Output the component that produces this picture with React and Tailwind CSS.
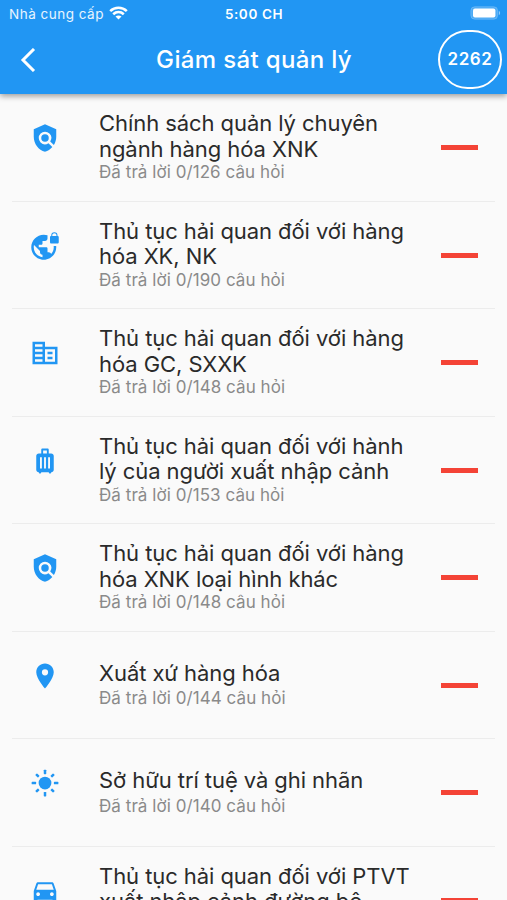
import {
  MdPolicy,
  MdVpnLock,
  MdCorporateFare,
  MdLuggage,
  MdPlace,
  MdDirectionsCar
} from 'react-icons/md';

const rayAngles = [0, 45, 90, 135, 180, 225, 270, 315];

function SunIcon({ size, className }) {
  return (
    <svg width={size} height={size} viewBox="0 0 24 24" className={className} fill="currentColor">
      <circle cx="12" cy="12" r="5.1" />
      {rayAngles.map((angle) => (
        <rect
          key={angle}
          x="11"
          y={angle % 90 === 0 ? 1.3 : 1.9}
          width="2"
          height={angle % 90 === 0 ? 3.6 : 3.1}
          rx=".5"
          transform={`rotate(${angle} 12 12)`}
        />
      ))}
    </svg>
  );
}

const topics = [
  { icon: MdPolicy, lines: ['Chính sách quản lý chuyên', 'ngành hàng hóa XNK'], total: 126 },
  { icon: MdVpnLock, lines: ['Thủ tục hải quan đối với hàng', 'hóa XK, NK'], total: 190 },
  { icon: MdCorporateFare, lines: ['Thủ tục hải quan đối với hàng', 'hóa GC, SXXK'], total: 148 },
  { icon: MdLuggage, lines: ['Thủ tục hải quan đối với hành', 'lý của người xuất nhập cảnh'], total: 153 },
  { icon: MdPolicy, lines: ['Thủ tục hải quan đối với hàng', 'hóa XNK loại hình khác'], total: 148 },
  { icon: MdPlace, lines: ['Xuất xứ hàng hóa'], total: 144 },
  { icon: SunIcon, lines: ['Sở hữu trí tuệ và ghi nhãn'], total: 140 },
  { icon: MdDirectionsCar, lines: ['Thủ tục hải quan đối với PTVT', 'xuất nhập cảnh đường bộ'], total: 120 }
];

function StatusBar() {
  return (
    <div className="grid h-7 grid-cols-3 items-center pl-[9px] pr-[6px] text-[13.5px] leading-7">
      <div className="flex items-center gap-[5px] whitespace-nowrap text-white/90">
        <span className="tracking-[0.5px]">Nhà cung cấp</span>
        <svg width="19" height="14" viewBox="0 0 19 14" className="mb-[3px]" fill="none" stroke="white" strokeWidth="2.6">
          <path d="M1.2 5.1C5.9 .6 13.1 .6 17.8 5.1" />
          <path d="M4.2 8.2C7.3 5.4 11.7 5.4 14.8 8.2" />
          <path d="M6.5 10.6C8.2 9 10.8 9 12.5 10.6L9.5 13.6Z" fill="white" stroke="none" />
        </svg>
      </div>
      <span className="-ml-[2px] text-center text-[13.5px] font-semibold tracking-[0.6px]">5:00 CH</span>
      <svg width="31" height="14" viewBox="0 0 31 14" className="mb-[2px] justify-self-end">
        <rect x=".8" y=".7" width="26.8" height="12.6" rx="4" fill="white" fillOpacity=".2" stroke="white" strokeOpacity=".2" />
        <rect x="3" y="2.6" width="22.4" height="8.8" rx="2" fill="white" />
        <path d="M28.8 4.8C30.6 5.6 30.6 8.4 28.8 9.2Z" fill="white" fillOpacity=".5" />
      </svg>
    </div>
  );
}

function Header() {
  return (
    <header className="relative h-[94px] shrink-0 bg-[#2196f3] text-white shadow-[0_2px_6px_rgba(0,0,0,0.4)]">
      <StatusBar />
      <div className="grid h-[63px] grid-cols-[80px_1fr_80px] items-center">
        <button className="pl-[20px]">
          <svg width="16" height="24" viewBox="0 0 16 24" fill="none" stroke="white" strokeWidth="3">
            <path d="M14 1L3 12l11 11" />
          </svg>
        </button>
        <h1 className="pl-px pt-px text-center text-[24px] font-[450] tracking-[0.35px]">Giám sát quản lý</h1>
        <div className="mr-[5px] flex h-[59px] w-[64px] items-center justify-center justify-self-end rounded-full border-[2.5px] border-white text-[17px] font-semibold tracking-[0.6px]">
          2262
        </div>
      </div>
    </header>
  );
}

function TopicRow({ topic }) {
  const Icon = topic.icon;
  const single = topic.lines.length === 1;
  return (
    <li className="mx-3 flex h-[107.5px] shrink-0 border-b border-[#ececec]">
      <div className="w-[87px] shrink-0 pl-[18px] pt-[29px]">
        <Icon size={30} className="text-[#2196f3]" />
      </div>
      <div className={single ? 'flex-1 whitespace-nowrap pt-[29px]' : 'flex-1 whitespace-nowrap pt-[17px]'}>
        <h2 className="text-[22px] leading-[25.5px] tracking-[-0.07px] text-[#2a2a2a]">
          {topic.lines.map((line) => (
            <span key={line} className="block">{line}</span>
          ))}
        </h2>
        <p className={single ? 'pt-[2px] text-[17px] leading-[21px] tracking-[0.06px] text-[#8a8a8a]' : 'text-[17px] leading-[21px] tracking-[0.06px] text-[#8a8a8a]'}>
          Đã trả lời 0/{topic.total} câu hỏi
        </p>
      </div>
      <div className="mr-[17px] mt-[51px] h-[5px] w-[37px] bg-[#f44336]" />
    </li>
  );
}

function App() {
  return (
    <div className="flex h-[900px] w-[507px] flex-col overflow-hidden bg-[#fafafa] font-['Inter',sans-serif]">
      <Header />
      <ul className="flex min-h-0 flex-1 flex-col overflow-hidden">
        {topics.map((topic, index) => (
          <TopicRow key={index} topic={topic} />
        ))}
      </ul>
    </div>
  );
}

export default App;
